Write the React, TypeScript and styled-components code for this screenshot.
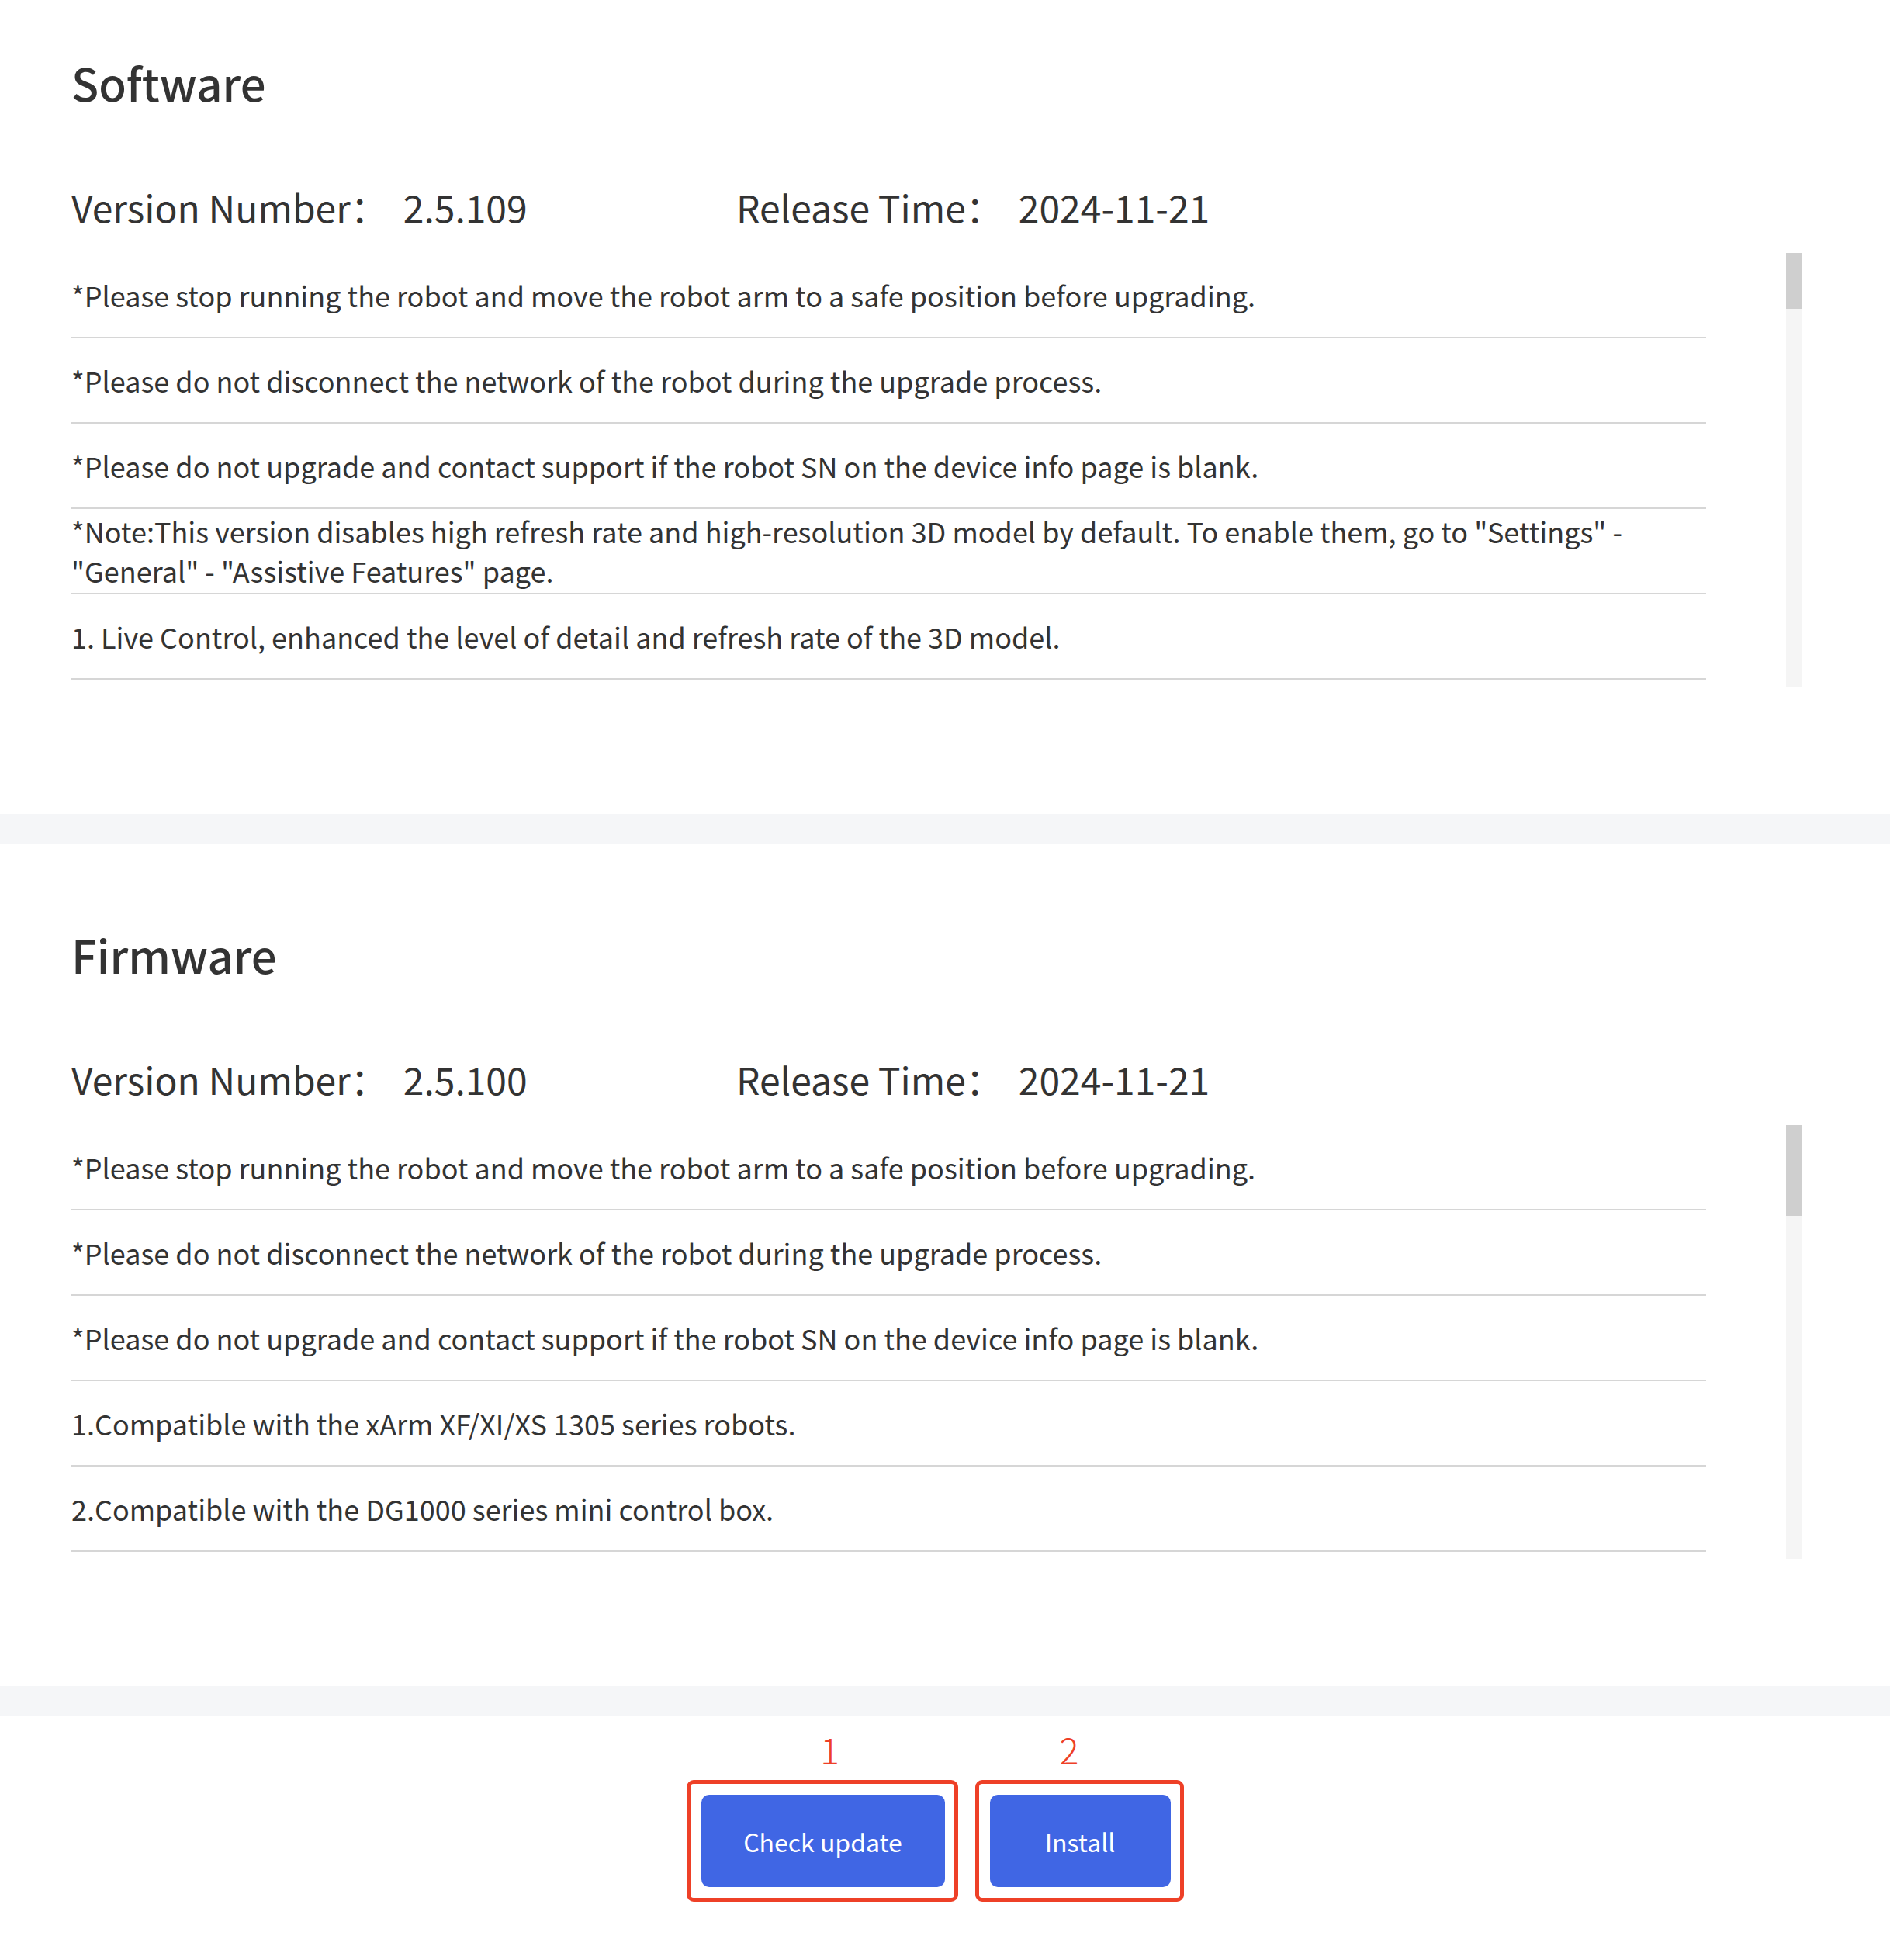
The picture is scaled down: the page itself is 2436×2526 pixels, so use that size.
import React from "react";
import styled, { createGlobalStyle } from "styled-components";

const GlobalStyle = createGlobalStyle`
  html, body {
    margin: 0;
    padding: 0;
    background: #ffffff;
  }
  body {
    font-family: "Noto Sans CJK SC", "Noto Sans", sans-serif;
    color: #333333;
  }
  * { box-sizing: border-box; }
`;

const Page = styled.div`
  display: flex;
  flex-direction: column;
  width: 2436px;
  min-height: 2526px;
  background: #ffffff;
`;

const Section = styled.section<{ $top: number }>`
  display: flex;
  flex-direction: column;
  padding: ${(p) => p.$top}px 0 164px 92px;
  background: #ffffff;
`;

const Band = styled.div`
  height: 39px;
  background: #f5f6f8;
`;

const Heading = styled.h2`
  margin: 0;
  font-size: 58px;
  font-weight: 500;
  line-height: 80px;
  color: #333333;
`;

const VersionRow = styled.div`
  display: flex;
  align-items: center;
  margin-top: 80px;
  height: 80px;
  font-size: 48px;
  font-weight: 400;
  color: #333333;
`;

const InfoItem = styled.div<{ $width?: number }>`
  display: flex;
  align-items: center;
  width: ${(p) => (p.$width ? `${p.$width}px` : "auto")};
`;

const InfoLabel = styled.span`
  white-space: nowrap;
`;

const InfoValue = styled.span`
  margin-left: 20px;
  white-space: nowrap;
`;

const NotesArea = styled.div`
  display: flex;
  margin-top: 20px;
  height: 559px;
`;

const NotesList = styled.ul`
  margin: 0;
  padding: 0;
  list-style: none;
  width: 2107px;
  height: 559px;
  overflow: hidden;
`;

const NoteRow = styled.li`
  display: flex;
  align-items: center;
  height: 110px;
  border-bottom: 2px solid #d6d6d6;
  font-size: 36px;
  font-weight: 400;
  line-height: 51px;
  color: #333333;
`;

const ScrollTrack = styled.div`
  display: flex;
  flex-direction: column;
  width: 20px;
  height: 559px;
  margin-left: 103px;
  background: #f5f5f5;
`;

const ScrollThumb = styled.div`
  width: 20px;
  background: #cfcfcf;
`;

const ActionBar = styled.div`
  display: flex;
  justify-content: center;
  align-items: flex-end;
  gap: 22px;
  padding: 18px 0 60px 0;
  margin-left: -26px;
`;

const ActionSlot = styled.div`
  display: flex;
  flex-direction: column;
  align-items: center;
`;

const StepLabel = styled.div<{ $shift: number }>`
  font-size: 46px;
  font-weight: 300;
  line-height: 48px;
  color: #ee4027;
  margin-bottom: 16px;
  margin-left: ${(p) => (p.$shift > 0 ? p.$shift * 2 : 0)}px;
  margin-right: ${(p) => (p.$shift < 0 ? -p.$shift * 2 : 0)}px;
`;

const Highlight = styled.div`
  border: 5px solid #ee4027;
  border-radius: 9px;
  padding: 14px 12px 14px 14px;
`;

const PrimaryButton = styled.button<{ $width: number }>`
  width: ${(p) => p.$width}px;
  height: 119px;
  border: none;
  border-radius: 10px;
  background: #4066e4;
  color: #ffffff;
  font-family: "Noto Sans CJK SC", "Noto Sans", sans-serif;
  font-size: 32px;
  font-weight: 400;
  cursor: pointer;
`;

type Info = {
  title: string;
  version: string;
  date: string;
  notes: string[];
  thumb: number;
  top: number;
};

const sections: Info[] = [
  {
    title: "Software",
    version: "2.5.109",
    date: "2024-11-21",
    top: 66,
    thumb: 72,
    notes: [
      "*Please stop running the robot and move the robot arm to a safe position before upgrading.",
      "*Please do not disconnect the network of the robot during the upgrade process.",
      "*Please do not upgrade and contact support if the robot SN on the device info page is blank.",
      '*Note:This version disables high refresh rate and high-resolution 3D model by default. To enable them, go to "Settings" - "General" - "Assistive Features" page.',
      "1. Live Control, enhanced the level of detail and refresh rate of the 3D model.",
    ],
  },
  {
    title: "Firmware",
    version: "2.5.100",
    date: "2024-11-21",
    top: 102,
    thumb: 117,
    notes: [
      "*Please stop running the robot and move the robot arm to a safe position before upgrading.",
      "*Please do not disconnect the network of the robot during the upgrade process.",
      "*Please do not upgrade and contact support if the robot SN on the device info page is blank.",
      "1.Compatible with the xArm XF/XI/XS 1305 series robots.",
      "2.Compatible with the DG1000 series mini control box.",
    ],
  },
];

function VersionSection({ info }: { info: Info }) {
  return (
    <Section $top={info.top}>
      <Heading>{info.title}</Heading>
      <VersionRow>
        <InfoItem $width={857}>
          <InfoLabel>Version Number：</InfoLabel>
          <InfoValue>{info.version}</InfoValue>
        </InfoItem>
        <InfoItem>
          <InfoLabel>Release Time：</InfoLabel>
          <InfoValue>{info.date}</InfoValue>
        </InfoItem>
      </VersionRow>
      <NotesArea>
        <NotesList>
          {info.notes.map((n, i) => (
            <NoteRow key={i}>{n}</NoteRow>
          ))}
        </NotesList>
        <ScrollTrack>
          <ScrollThumb style={{ height: info.thumb }} />
        </ScrollTrack>
      </NotesArea>
    </Section>
  );
}

const actions = [
  { step: "1", label: "Check update", width: 314, shift: 10 },
  { step: "2", label: "Install", width: 233, shift: -13 },
];

export default function App() {
  return (
    <Page>
      <GlobalStyle />
      <VersionSection info={sections[0]} />
      <Band />
      <VersionSection info={sections[1]} />
      <Band />
      <ActionBar>
        {actions.map((a) => (
          <ActionSlot key={a.step}>
            <StepLabel $shift={a.shift}>{a.step}</StepLabel>
            <Highlight>
              <PrimaryButton $width={a.width}>{a.label}</PrimaryButton>
            </Highlight>
          </ActionSlot>
        ))}
      </ActionBar>
    </Page>
  );
}
